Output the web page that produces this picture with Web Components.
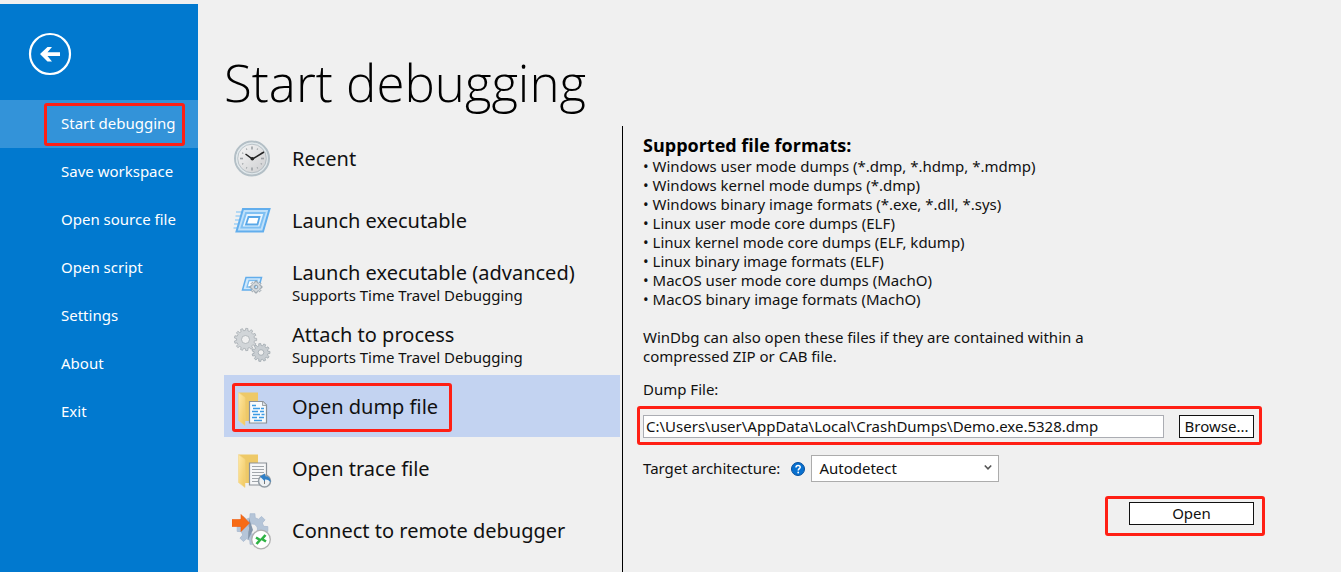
<!DOCTYPE html>
<html lang="en">
<head>
<meta charset="utf-8">
<title>Start debugging</title>
<style>
html, body { margin: 0; height: 100%; }
body { background: #f0f0f0; color: #111; font: 15px/19px "Noto Sans", "Open Sans", sans-serif; overflow: hidden; }
</style>
</head>
<body>
<debug-start></debug-start>

<template id="t-start">
<style>
:host { display: grid; grid-template-columns: 198px 1fr; min-height: 100%; padding-top: 4px; box-sizing: border-box; }
main { display: flex; flex-direction: column; padding-left: 26px; min-width: 0; }
h1 { margin: 0; padding-top: 42px; font: 300 51px/72px "Open Sans", "Noto Sans", sans-serif; color: #000; }
.body { flex: 1; margin-top: 8px; display: grid; grid-template-columns: 398px 1fr; }
.list { padding: 1px 2px 0 0; }
.panel { border-left: 1px solid #000; }
</style>
<side-nav></side-nav>
<main>
  <h1>Start debugging</h1>
  <div class="body">
    <div class="list">
      <launch-option icon="recent">Recent</launch-option>
      <launch-option icon="launch">Launch executable</launch-option>
      <launch-option icon="advanced" note="Supports Time Travel Debugging">Launch executable (advanced)</launch-option>
      <launch-option icon="attach" note="Supports Time Travel Debugging">Attach to process</launch-option>
      <launch-option icon="dump" selected>Open dump file</launch-option>
      <launch-option icon="trace">Open trace file</launch-option>
      <launch-option icon="remote">Connect to remote debugger</launch-option>
    </div>
    <div class="panel"><dump-panel></dump-panel></div>
  </div>
</main>
</template>

<template id="t-nav">
<style>
:host { display: block; background: #0179cf; }
nav { display: flex; flex-direction: column; }
.back { margin: 28px 0 24px 28px; width: 44px; height: 44px; padding: 0; border: 0; background: none; }
.back svg { display: block; }
</style>
<nav>
  <button class="back" aria-label="Back"><svg width="44" height="44" viewBox="0 0 44 44" fill="none"><circle cx="22" cy="22" r="20" stroke="#fff" stroke-width="2.2"/><path d="M32 20.3H19.500L24 15H19.500L12 22L19.500 29.500H24L19.500 24H32Z" fill="#fff"/></svg></button>
  <nav-item current>Start debugging</nav-item>
  <nav-item>Save workspace</nav-item>
  <nav-item>Open source file</nav-item>
  <nav-item>Open script</nav-item>
  <nav-item>Settings</nav-item>
  <nav-item>About</nav-item>
  <nav-item>Exit</nav-item>
</nav>
</template>

<template id="t-nav-item">
<style>
:host { display: block; position: relative; }
button { display: block; width: 100%; height: 48px; padding: 0 0 2px 61px; border: 0; background: none; color: #fff; font: 15px/19px "Noto Sans", sans-serif; text-align: left; white-space: nowrap; }
:host([current]) button { background: #3393d9; }
red-frame { display: none; inset: 3px 13px 2px 44px; }
:host([current]) red-frame { display: block; }
</style>
<button><slot></slot></button><red-frame></red-frame>
</template>

<template id="t-frame">
<style>:host { display: block; position: absolute; box-sizing: border-box; border: 3px solid #ff1f14; border-radius: 3px; pointer-events: none; }</style>
</template>

<template id="t-option">
<style>
:host { display: block; position: relative; color: #111; }
button { display: flex; align-items: center; gap: 20px; width: 100%; height: 62px; padding: 0 0 0 8px; border: 0; background: none; color: inherit; text-align: left; font: 20px/24px "Noto Sans", sans-serif; white-space: nowrap; }
:host([selected]) button { background: #c3d3f1; }
svg { flex: none; }
.text { padding-top: 2px; }
.note { display: block; font-size: 15px; line-height: 20px; }
red-frame { display: none; inset: 8px 168px 5px 8px; }
:host([selected]) red-frame { display: block; }
</style>
<button><svg width="40" height="40" viewBox="0 0 40 40" fill="none" aria-hidden="true"></svg><span class="text"><slot></slot><span class="note"></span></span></button><red-frame></red-frame>
</template>

<template id="t-panel">
<style>
:host { display: block; padding: 7px 87px 0 20px; }
h2 { margin: 0; font: 700 18px/24px "Open Sans", "Noto Sans", sans-serif; color: #000; }
ul { margin: 0; padding: 0; list-style: none; }
li::before { content: "• "; }
p { margin: 19px 0 14px; max-width: 500px; }
label { white-space: nowrap; }
.file { position: relative; display: flex; gap: 15px; margin-top: 16px; }
input { flex: 1; min-width: 0; height: 23px; box-sizing: border-box; padding: 0 2px 2px; border: 1px solid #abadb3; background: #fff; color: #111; font: 15px/19px "Noto Sans", sans-serif; }
button { height: 23px; box-sizing: border-box; padding: 0; border: 1px solid #111; background: #fff; color: #111; font: 15px/19px "Noto Sans", sans-serif; }
.browse { width: 75px; }
.file red-frame { inset: -9px -8px -7px -6px; }
.arch { display: flex; align-items: center; margin-top: 17px; }
.arch svg { margin: 0 6px 0 11px; }
.sel { position: relative; width: 188px; height: 27px; }
select { appearance: none; width: 100%; height: 100%; box-sizing: border-box; padding: 0 7px; border: 1px solid #acacac; border-radius: 0; background: #fff; color: #111; font: 15px/19px "Noto Sans", sans-serif; }
.arch .sel svg { position: absolute; margin: 0; right: 7px; top: 9px; pointer-events: none; }
.go { position: relative; width: 125px; margin: 20px 0 0 auto; }
.go button { display: block; width: 100%; }
.go red-frame { inset: -6px -11px -11px -24px; }
</style>
<h2>Supported file formats:</h2>
<ul>
  <li>Windows user mode dumps (*.dmp, *.hdmp, *.mdmp)</li>
  <li>Windows kernel mode dumps (*.dmp)</li>
  <li>Windows binary image formats (*.exe, *.dll, *.sys)</li>
  <li>Linux user mode core dumps (ELF)</li>
  <li>Linux kernel mode core dumps (ELF, kdump)</li>
  <li>Linux binary image formats (ELF)</li>
  <li>MacOS user mode core dumps (MachO)</li>
  <li>MacOS binary image formats (MachO)</li>
</ul>
<p>WinDbg can also open these files if they are contained within a compressed ZIP or CAB file.</p>
<label for="file">Dump File:</label>
<div class="file">
  <input id="file" type="text" value="C:\Users\user\AppData\Local\CrashDumps\Demo.exe.5328.dmp" spellcheck="false">
  <button class="browse">Browse...</button>
  <red-frame></red-frame>
</div>
<div class="arch">
  <label for="arch">Target architecture:</label>
  <svg width="14" height="14" viewBox="0 0 14 14" fill="none"><circle cx="7" cy="7" r="6.500" fill="#0870cf" stroke="#064f9c"/><path d="M5 5.400C5 3 9.200 3 9.200 5.200C9.200 6.700 7.200 6.700 7.200 8.500" stroke="#fff" stroke-width="1.500"/><circle cx="7.200" cy="10.500" r=".9" fill="#fff"/></svg>
  <div class="sel">
    <select id="arch"><option>Autodetect</option></select>
    <svg width="8" height="7" viewBox="0 0 8 7" fill="none"><path d="M.8 1.500L4 4.800L7.200 1.500" stroke="#555" stroke-width="1.600"/></svg>
  </div>
</div>
<div class="go"><button>Open</button><red-frame></red-frame></div>
</template>

<script>
/* Outline of a cog wheel with a round hole, centred on (cx, cy). */
function cog(cx, cy, outer, inner, hole, teeth) {
  const pts = [];
  for (let i = 0; i < teeth; i++) {
    [[-.3, inner], [-.2, outer], [.2, outer], [.3, inner]].forEach(([o, r]) => {
      const a = (i + o) / teeth * Math.PI * 2;
      pts.push((cx + r * Math.cos(a)).toFixed(2) + ' ' + (cy + r * Math.sin(a)).toFixed(2));
    });
  }
  return `M${pts.join('L')}ZM${cx - hole} ${cy}a${hole} ${hole} 0 1 0 ${2 * hole} 0a${hole} ${hole} 0 1 0 ${-2 * hole} 0Z`;
}
function gear(cx, cy, outer, inner, hole, teeth, fill, stroke) {
  return `<path fill-rule="evenodd" d="${cog(cx, cy, outer, inner, hole, teeth)}" fill="${fill}" stroke="${stroke}" stroke-width=".8"/>`;
}
const ticks = Array.from({ length: 12 }, (_, i) =>
  `<path d="M20 ${i % 3 ? 9 : 8.5}v${i % 3 ? 1.5 : 3}" stroke="#9a9fa3" stroke-width="${i % 3 ? 1 : 1.6}" transform="rotate(${i * 30} 20 20.5)"/>`).join('');
const folder = `<defs><linearGradient id="f" x1="0" y1="0" x2="1" y2="1"><stop stop-color="#ffe9a6"/><stop offset="1" stop-color="#f0c75e"/></linearGradient></defs>
  <path d="M7 6.500H26V35H12Z" fill="#eec967"/><path d="M6.500 6.500L13 11.500V39.500L6.500 34.500Z" fill="url(#f)" stroke="#f3d588" stroke-width=".6"/>`;
const ICONS = {
  recent: `<defs><linearGradient id="c" x1="0" y1="0" x2="1" y2="1"><stop stop-color="#fafafa"/><stop offset="1" stop-color="#c9cacc"/></linearGradient></defs>
    <circle cx="20" cy="20.500" r="17" fill="url(#c)" stroke="#b3bfc6" stroke-width="2"/><circle cx="20" cy="20.500" r="15.200" stroke="#dfe8ec" stroke-width="1.200"/><circle cx="20" cy="20.500" r="14.300" stroke="#a6b2b9" stroke-width=".7"/>${ticks}
    <path d="M13.500 16L20.500 21L32 14" stroke="#222" stroke-width="1.500"/><circle cx="20.300" cy="20.800" r="1.800" fill="#222"/>`,
  launch: `<path d="M4 12h6M3.500 16h5M3 20h5M2 24h5M1.500 28h5" stroke="#9ed0f5" stroke-width="1.500"/>
    <path d="M11 9H37.500L31 31.500H4.500Z" fill="#bfe0fa" stroke="#62aeed" stroke-width="2"/>
    <path d="M14 13H32.500L28 27.500H9.500Z" fill="#e6f4ff" stroke="#7fc0f3" stroke-width="2"/><path d="M16.500 17H27.500L25.500 24.500H14Z" fill="#fff" stroke="#58a7e8" stroke-width="1.800"/>`,
  advanced: `<path d="M14 15.500H29.500L26 28H10.500Z" fill="#cfe8fc" stroke="#62adeb" stroke-width="1.500"/><path d="M17 18.500H25L23 25H15Z" fill="#fff" stroke="#7cbdf0" stroke-width="1.300"/>
    ${gear(24, 25, 6, 4.5, 1.8, 8, '#d5dade', '#87929a')}`,
  attach: gear(13.5, 15.5, 11.2, 9, 4, 13, '#d1d5d8', '#a7adb2') + gear(29, 28.5, 9, 7, 2.8, 11, '#c9ced2', '#a0a8ae'),
  dump: `${folder}<path d="M17.500 15.500H31L34.500 19V37H17.500Z" fill="#f8fbfd" stroke="#8b9197" stroke-width="1.200"/><path d="M30.500 15.500V19.500H34.500" fill="#dde2e6" stroke="#8b9197" stroke-width=".8"/>
    <path d="M20 19.500h4M21 22.500h7M29 22.500h3M20 25.500h6M28 25.500h4M21 28.500h7M29.500 28.500h3M20 31.500h5M27 31.500h5M22 34.500h8" stroke="#3c9be4" stroke-width="1.500"/>`,
  trace: `${folder}<path d="M17.500 15H34.500V37H17.500Z" fill="#f6f7f8" stroke="#8b9197" stroke-width="1.200"/><path d="M20 18.500h12M20 21.500h12M20 24.500h12M20 27.500h9M20 30.500h7M20 33.500h6" stroke="#a1a6ab" stroke-width="1.200"/>
    <circle cx="32.500" cy="33" r="6" fill="#eef1f3" stroke="#919ba3" stroke-width="1.500"/><path d="M32.500 36v-4" stroke="#777" stroke-width="1"/><path d="M28 28.500L33 25.500V28C37 28 39 31 38.500 34.500C37 32 35.500 31.300 33 31.500V33.500Z" fill="#2f7fc6"/>`,
  remote: `${gear(20.5, 19, 15.5, 11.5, 5, 8, '#b5c5d8', '#a9bacf')}<path d="M17 8L21 20L16 30Z" fill="#8395aa"/>
    <path d="M0 9.500H9V4.500L17.500 13L9 21.500V16.500H0Z" fill="#f76b15" stroke="#ee5a0b" stroke-width=".6"/>
    <circle cx="29" cy="29.500" r="9.300" fill="#fff" stroke="#b0b0b0" stroke-width="1.300"/><path d="M24 27.500L28 30L24.500 34M33.500 25L30 29L34 31.500" stroke="#2fb344" stroke-width="2.600"/>`
};

function define(name, templateId, setup) {
  customElements.define(name, class extends HTMLElement {
    constructor() {
      super();
      this.attachShadow({ mode: 'open' }).append(document.getElementById(templateId).content.cloneNode(true));
    }
    connectedCallback() { if (setup) setup(this, this.shadowRoot); }
  });
}
define('red-frame', 't-frame');
define('nav-item', 't-nav-item');
define('side-nav', 't-nav');
define('launch-option', 't-option', (el, root) => {
  root.querySelector('svg').innerHTML = ICONS[el.getAttribute('icon')];
  const note = root.querySelector('.note');
  if (el.hasAttribute('note')) note.textContent = el.getAttribute('note');
  else note.remove();
});
define('dump-panel', 't-panel');
define('debug-start', 't-start');
</script>
</body>
</html>
